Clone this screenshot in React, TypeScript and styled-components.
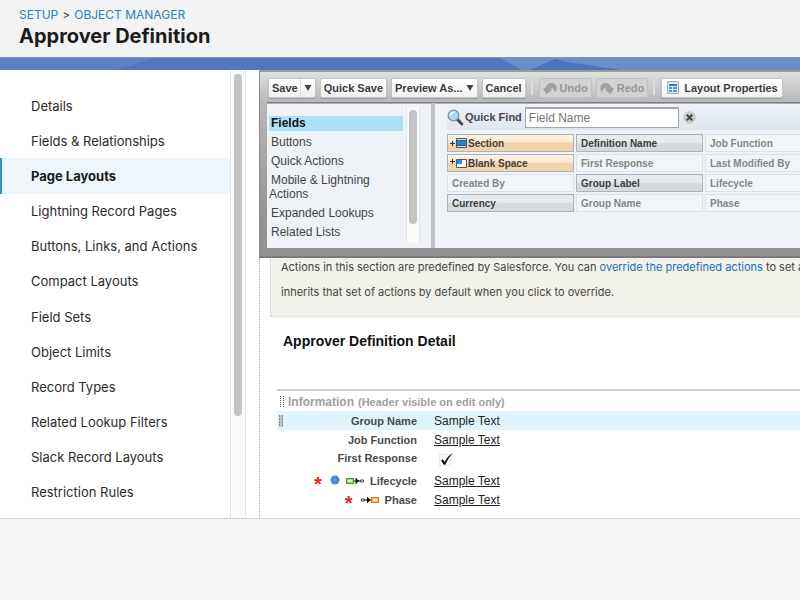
import React from "react";
import styled, { createGlobalStyle, css } from "styled-components";

const sans = `"Liberation Sans", Arial, Helvetica, sans-serif`;
const ui = `Inter, "Open Sans", sans-serif`;

const GlobalStyle = createGlobalStyle`
  *, *::before, *::after { box-sizing: border-box; }
  body { margin: 0; background: #f4f4f4; font-family: ${sans}; }
  h1, h2, h3, p, ul, dl, dd { margin: 0; padding: 0; }
  ul { list-style: none; }
  button, input { font-family: inherit; }
`;

const Page = styled.div`
  display: flex;
  flex-direction: column;
  min-height: 100vh;
  overflow: hidden;
`;

const Header = styled.header`
  padding: 7px 19px 8px;
  background: #f3f3f3;
  font-family: ${ui};
`;

const Crumbs = styled.nav`
  display: flex;
  gap: 4px;
  font-size: 12px;
  line-height: 16px;
  color: #444;
`;

const CrumbLink = styled.a`
  color: #2e7fbd;
  text-decoration: none;
`;

const Title = styled.h1`
  font-size: 20px;
  font-weight: 700;
  line-height: 26px;
  color: #1c1c1c;
`;

const Banner = styled.svg`
  display: block;
  width: 100%;
  height: 13px;
  border-top: 1px solid #8093b8;
  background: #5078c0;
`;

const Workspace = styled.div`
  display: flex;
  flex: 1;
  background: #fff;
  border-bottom: 1px solid #d6d6d6;
`;

const Sidebar = styled.nav`
  display: flex;
  flex: 0 0 230px;
  flex-direction: column;
  padding: 18px 0 8px;
  font-family: ${ui};
`;

const SideLink = styled.a<{ $active?: boolean }>`
  display: flex;
  flex: 1;
  align-items: center;
  min-height: 35px;
  padding-left: 31px;
  color: #2b2b2b;
  font-size: 13px;
  text-decoration: none;
  ${(p) =>
    p.$active &&
    css`
      padding-left: 29px;
      border-left: 2px solid #2a94d6;
      background: #eff6fb;
      color: #1a1a1a;
      font-weight: 700;
    `}
`;

const ScrollTrack = styled.div<{ $narrow?: boolean }>`
  flex: none;
  width: ${(p) => (p.$narrow ? 14 : 16)}px;
  padding: ${(p) => (p.$narrow ? "3px 2px 0" : "4px 3px 0")};
  background: #fafafa;
  border: solid #e4e4e4;
  border-width: 0 1px;
`;

const ScrollThumb = styled.div<{ $ratio: number }>`
  height: ${(p) => p.$ratio}%;
  border-radius: 4px;
  background: #c4c4c4;
`;

const Main = styled.main`
  display: flex;
  flex: 1;
  flex-direction: column;
  min-width: 0;
  margin-left: 13px;
  overflow: hidden;
  white-space: nowrap;
`;

const Editor = styled.section`
  position: relative;
  z-index: 1;
  padding: 0 0 8px 7px;
  border-top: 2px solid #9b9b9f;
  border-left: 1px solid #8b8b8b;
  border-bottom: 2px solid #7b7b7b;
  background: linear-gradient(#e0e0e0, #b8b8ba 30px, #929292 150px);
`;

const Toolbar = styled.div`
  display: flex;
  align-items: center;
  gap: 4px;
  height: 30px;
  padding: 5px 0 4px 1px;
`;

const ToolButton = styled.button`
  display: flex;
  flex: none;
  align-items: center;
  gap: 3px;
  height: 20px;
  padding: 0 3px;
  border: 1px solid #c4c4c4;
  border-radius: 2px;
  background: linear-gradient(#fff, #f1f1f1);
  box-shadow: 0 1px 1px #9a9a9a;
  color: #3c3c3c;
  font-size: 11px;
  font-weight: 700;
  line-height: 18px;
  &:disabled {
    border-color: #c0c0c0;
    background: #d2d2d2;
    box-shadow: none;
    color: #969696;
  }
`;

const SaveLabel = styled.span`
  padding-right: 2px;
  border-right: 1px solid #d5dbe2;
`;

const WideButton = styled(ToolButton)`
  gap: 5px;
  padding: 0 4px 0 5px;
`;

const Separator = styled.span`
  flex: none;
  width: 2px;
  height: 15px;
  margin: 0 2px 0 1px;
  background: #dedede;
`;

const Palette = styled.div`
  display: flex;
  gap: 4px;
  border-top: 1px solid #7e7e7e;
  background: #bfc1c4;
`;

const Categories = styled.div`
  display: flex;
  flex: 0 0 164px;
  background: #eff3f7;
  border-top: 1px solid #a9adb1;
`;

const CategoryList = styled.ul`
  display: flex;
  flex: 1;
  flex-direction: column;
  gap: 4px;
  min-width: 0;
  padding: 12px 0 8px 2px;
`;

const Category = styled.li<{ $active?: boolean }>`
  white-space: normal;
  padding-bottom: 1px;
  color: #444;
  font-size: 12px;
  line-height: 14px;
  text-indent: 2px;
  ${(p) =>
    p.$active &&
    css`
      background: #aee0fa;
      color: #111;
      font-weight: 700;
    `}
`;

const CategoryTrack = styled.div`
  display: flex;
  flex: none;
  padding: 3px 11px 5px 3px;
`;

const Fields = styled.div`
  flex: 1;
  min-width: 0;
  padding-left: 12px;
  background: #eff3f7;
  border-top: 1px solid #a9adb1;
  overflow: hidden;
`;

const Finder = styled.form`
  display: flex;
  align-items: center;
  height: 26px;
  background: linear-gradient(#eff3f7, #dde6ef);
`;

const FindLabel = styled.label`
  display: flex;
  align-items: center;
  gap: 1px;
  padding-right: 3px;
  color: #444;
  font-size: 11px;
  font-weight: 700;
`;

const FindInput = styled.input`
  width: 154px;
  height: 21px;
  padding: 0 3px;
  border: 1px solid #a5a9ae;
  border-width: 2px 1px 1px;
  background: #fff;
  color: #777;
  font-size: 12px;
  &::placeholder { color: #777; opacity: 1; }
`;

const ClearButton = styled.button`
  display: flex;
  margin-left: 4px;
  padding: 0;
  border: 0;
  background: none;
`;

const FieldGrid = styled.div`
  display: grid;
  grid-template-columns: repeat(3, 127px);
  grid-auto-rows: 18px;
  gap: 2px;
  padding-top: 4px;
`;

type Tone = "special" | "available" | "used";

const FieldChip = styled.button<{ $tone: Tone }>`
  display: flex;
  align-items: center;
  gap: 1px;
  padding: 0 4px;
  border: 1px solid #dbe1e6;
  background: #f1f5f8;
  color: #858585;
  font-size: 10px;
  font-weight: 700;
  ${(p) =>
    p.$tone === "available" &&
    css`
      border: 1px solid #a9b4bd;
      background: linear-gradient(#e7ebee 45%, #d6dadd 55%);
      color: #3e3e3e;
    `}
  ${(p) =>
    p.$tone === "special" &&
    css`
      padding: 0 2px;
      border: 1px solid #a9b4bd;
      background: linear-gradient(#fdf3e6 0, #fae8d0 45%, #efd3ab 50%);
      color: #3e3e3e;
    `}
`;

const Canvas = styled.section`
  flex: 1;
  padding-left: 10px;
  border-left: 1px dotted #aaa;
`;

const Notice = styled.p`
  height: 62px;
  margin-top: -3px;
  padding-left: 10px;
  border: 1px dotted #cbcbc4;
  border-width: 0 0 1px 1px;
  background: #f2f2ea;
  color: #444;
  font-family: ${ui};
  font-size: 11px;
  line-height: 25px;
`;

const NoticeLink = styled.a`
  color: #1b6cb5;
  text-decoration: none;
`;

const DetailTitle = styled.h2`
  padding: 15px 0 0 13px;
  color: #111;
  font-size: 14px;
  line-height: 18px;
`;

const Detail = styled.section`
  margin: 39px 0 0 7px;
  border-top: 2px solid #cfcfcf;
`;

const SectionTitle = styled.h3`
  display: flex;
  align-items: center;
  gap: 4px;
  height: 20px;
  padding: 1px 0 0 3px;
  color: #a0a0a0;
  font-size: 12px;
`;

const SectionHint = styled.small`
  font-size: 11px;
`;

const DetailRow = styled.div<{ $active?: boolean; $tall?: boolean }>`
  display: flex;
  align-items: ${(p) => (p.$tall ? "flex-start" : "center")};
  height: ${(p) => (p.$tall ? 22 : 19)}px;
  padding-left: 2px;
  background: ${(p) => (p.$active ? "#e1f4fe" : "transparent")};
`;

const RowHead = styled.dt`
  display: flex;
  align-items: center;
  flex: 0 0 138px;
`;

const RowLabel = styled.span`
  display: flex;
  align-items: center;
  justify-content: flex-end;
  flex: 1;
  gap: 6px;
  color: #4a4a4a;
  font-size: 11px;
  font-weight: 700;
  line-height: 18px;
`;

const RowValue = styled.dd<{ $mark?: boolean }>`
  padding: ${(p) => (p.$mark ? "3px 0 0 22px" : "0 0 0 17px")};
  color: #222;
  font-size: 12px;
`;

const Sample = styled.span<{ $plain?: boolean }>`
  text-decoration: ${(p) => (p.$plain ? "none" : "underline")};
`;

const Required = styled.span`
  height: 18px;
  margin-right: 2px;
  color: #fb1d1d;
  font-size: 20px;
  line-height: 24px;
`;

const Footer = styled.footer`
  height: 81px;
  background: #f4f4f4;
`;

const Caret = () => (
  <svg width="8" height="6" viewBox="0 0 8 6" aria-hidden="true">
    <path d="M0.5 0h7L4 6z" fill="#444" />
  </svg>
);

const TurnIcon = ({ flip }: { flip?: boolean }) => (
  <svg width="14" height="12" viewBox="0 0 14 12" aria-hidden="true">
    <g transform={flip ? "translate(14 0) scale(-1 1)" : undefined}>
      <path d="M0 6.500 2.500 5.500C4 1.500 8 0 11 1.500c3.500 2 3.500 6 1 9-.5-3-2-5-4.500-4l1.500 1.500L3.500 12z" fill="#a0a0a0" />
    </g>
  </svg>
);

const LayoutIcon = () => (
  <svg width="12" height="13" viewBox="0 0 12 13" aria-hidden="true">
    <path d="M.5.5h11v12H.5z" fill="#dfe8f1" stroke="#a5adb5" />
    <path d="M2 3h8v2H2z" fill="#1b83d2" />
    <path d="M2 6h3v2H2zm4 0h4v2H6zM2 9h3v2H2zm4 0h4v2H6z" fill="#3d9be4" />
  </svg>
);

const SearchIcon = () => (
  <svg width="17" height="17" viewBox="0 0 17 17" aria-hidden="true">
    <path d="m10.500 10.500 4.300 4.500" stroke="#3f4952" strokeWidth="3" strokeLinecap="round" />
    <circle cx="6.500" cy="6.500" r="5.300" fill="#a9daf5" stroke="#8493a1" strokeWidth="1.300" />
    <path d="M3.500 6.500c0-2 1.500-3 3.500-3" fill="none" stroke="#fff" strokeWidth="1.600" />
  </svg>
);

const ClearIcon = () => (
  <svg width="13" height="13" viewBox="0 0 13 13" aria-hidden="true">
    <circle cx="6.500" cy="6.500" r="6.300" fill="#cbcbcb" />
    <path d="m3.800 3.800 5.400 5.400m0-5.400L3.800 9.200" stroke="#444" strokeWidth="2" />
  </svg>
);

const SectionIcon = () => (
  <svg width="17" height="12" viewBox="0 0 17 12" aria-hidden="true">
    <path d="M0 6.500h5M2.500 4v5" stroke="#333" />
    <path d="M6.500 1.500h10v9h-10z" fill="#cfe6f7" stroke="#555" />
    <path d="M7 4h9v4H7z" fill="#0d8be8" />
    <path d="M7 3.500h9m-9 5h9" stroke="#555" />
  </svg>
);

const BlankIcon = () => (
  <svg width="17" height="12" viewBox="0 0 17 12" aria-hidden="true">
    <path d="M0 4.500h5M2.500 2v5" stroke="#333" />
    <path d="M6.500 2.500h10v8h-10z" fill="#fff" stroke="#555" />
    <path d="M7 3h5v4H7z" fill="#0d9bf5" />
  </svg>
);

const Grip = ({ solid }: { solid?: boolean }) => (
  <svg width="4" height="12" viewBox="0 0 4 12" aria-hidden="true">
    {solid && <path d="M0 0h4v12H0z" fill="#b9c6cd" />}
    <path d="M.5 0v12m3-12v12" stroke={solid ? "#7f8a90" : "#555"} strokeDasharray={solid ? "2 1" : "1 1"} />
  </svg>
);

const Check = () => (
  <svg width="15" height="15" viewBox="0 0 15 15" role="img" aria-label="Checked">
    <path d="M.5 2.500h11v11H.5z" fill="none" stroke="#d5d5d5" strokeDasharray="1 1" />
    <path d="m2 8.500 1.800-1.200 1.900 2.700C7.500 6 10 3 14 1 10.500 4.500 8.300 8 6.400 12.700H4.900z" fill="#111" />
  </svg>
);

const Dot = () => (
  <svg width="10" height="12" viewBox="0 0 10 12" aria-hidden="true">
    <circle cx="5" cy="5" r="4.500" fill="#4a86dc" />
    <circle cx="5" cy="5" r="1" fill="#7fb0f0" />
  </svg>
);

const Controlling = () => (
  <svg width="18" height="8" viewBox="0 0 18 8" aria-hidden="true">
    <path d="M.7 1.700h6.600v4.600H.7z" fill="#ffffa8" stroke="#3ca52e" strokeWidth="1.400" />
    <path d="M8 4h6" stroke="#222" strokeWidth="1.200" />
    <path d="m9.500.5 3.500 3.500-3.500 3.500z" fill="#111" />
    <path d="M14.500 3h3v2h-3z" fill="#fff" stroke="#444" />
  </svg>
);

const Dependent = () => (
  <svg width="18" height="8" viewBox="0 0 18 8" aria-hidden="true">
    <path d="M.5 3h3v2h-3z" fill="#fff" stroke="#444" />
    <path d="M4 4h6" stroke="#222" strokeWidth="1.200" />
    <path d="m6 .5 3.500 3.500L6 7.500z" fill="#111" />
    <path d="M10.700 1.700h6.600v4.600h-6.600z" fill="#ffffa8" stroke="#f06a2c" strokeWidth="1.400" />
  </svg>
);

const sideItems = [
  "Details",
  "Fields & Relationships",
  "Page Layouts",
  "Lightning Record Pages",
  "Buttons, Links, and Actions",
  "Compact Layouts",
  "Field Sets",
  "Object Limits",
  "Record Types",
  "Related Lookup Filters",
  "Slack Record Layouts",
  "Restriction Rules",
];

const categories = ["Fields", "Buttons", "Quick Actions", "Mobile & Lightning Actions", "Expanded Lookups", "Related Lists"];

const fields: { label: string; tone: Tone; icon?: React.ReactNode }[] = [
  { label: "Section", tone: "special", icon: <SectionIcon /> },
  { label: "Definition Name", tone: "available" },
  { label: "Job Function", tone: "used" },
  { label: "Blank Space", tone: "special", icon: <BlankIcon /> },
  { label: "First Response", tone: "used" },
  { label: "Last Modified By", tone: "used" },
  { label: "Created By", tone: "used" },
  { label: "Group Label", tone: "available" },
  { label: "Lifecycle", tone: "used" },
  { label: "Currency", tone: "available" },
  { label: "Group Name", tone: "used" },
  { label: "Phase", tone: "used" },
];

const rows: { label: string; active?: boolean; checked?: boolean; marks?: React.ReactNode }[] = [
  { label: "Group Name", active: true },
  { label: "Job Function" },
  { label: "First Response", checked: true },
  {
    label: "Lifecycle",
    marks: (
      <>
        <Required>*</Required>
        <Dot />
        <Controlling />
      </>
    ),
  },
  {
    label: "Phase",
    marks: (
      <>
        <Required>*</Required>
        <Dependent />
      </>
    ),
  },
];

export default function App() {
  return (
    <Page>
      <GlobalStyle />
      <Header>
        <Crumbs aria-label="Breadcrumb">
          <CrumbLink href="#setup">SETUP</CrumbLink>
          <span>&gt;</span>
          <CrumbLink href="#objects">OBJECT MANAGER</CrumbLink>
        </Crumbs>
        <Title>Approver Definition</Title>
      </Header>
      <Banner viewBox="0 0 800 12" preserveAspectRatio="none" aria-hidden="true">
        <path d="M0 0h155L115 12H0z" fill="#5d82c3" />
        <path d="M500 0h300v12H522z" fill="#6d8dca" />
        <path d="m530 12 25-11 12 3 20 3 35 5z" fill="#4a74be" />
      </Banner>
      <Workspace>
        <Sidebar aria-label="Object settings">
          {sideItems.map((item) => (
            <SideLink key={item} href="#" $active={item === "Page Layouts"}>
              {item}
            </SideLink>
          ))}
        </Sidebar>
        <ScrollTrack>
          <ScrollThumb $ratio={77} />
        </ScrollTrack>
        <Main>
          <Editor>
            <Toolbar>
              <ToolButton>
                <SaveLabel>Save</SaveLabel>
                <Caret />
              </ToolButton>
              <ToolButton>Quick Save</ToolButton>
              <ToolButton>
                Preview As... <Caret />
              </ToolButton>
              <ToolButton>Cancel</ToolButton>
              <Separator />
              <ToolButton disabled>
                <TurnIcon />
                Undo
              </ToolButton>
              <ToolButton disabled>
                <TurnIcon flip />
                Redo
              </ToolButton>
              <Separator />
              <WideButton>
                <LayoutIcon />
                Layout Properties
              </WideButton>
            </Toolbar>
            <Palette>
              <Categories>
                <CategoryList>
                  {categories.map((name) => (
                    <Category key={name} $active={name === "Fields"}>
                      {name}
                    </Category>
                  ))}
                </CategoryList>
                <CategoryTrack>
                  <ScrollTrack $narrow>
                    <ScrollThumb $ratio={86} />
                  </ScrollTrack>
                </CategoryTrack>
              </Categories>
              <Fields>
                <Finder>
                  <FindLabel htmlFor="quick-find">
                    <SearchIcon />
                    Quick Find
                  </FindLabel>
                  <FindInput id="quick-find" type="text" placeholder="Field Name" />
                  <ClearButton type="button" aria-label="Clear">
                    <ClearIcon />
                  </ClearButton>
                </Finder>
                <FieldGrid>
                  {fields.map((field) => (
                    <FieldChip key={field.label} $tone={field.tone} type="button">
                      {field.icon}
                      {field.label}
                    </FieldChip>
                  ))}
                </FieldGrid>
              </Fields>
            </Palette>
          </Editor>
          <Canvas>
            <Notice>
              Actions in this section are predefined by Salesforce. You can{" "}
              <NoticeLink href="#override">override the predefined actions</NoticeLink> to set a
              <br />
              inherits that set of actions by default when you click to override.
            </Notice>
            <DetailTitle>Approver Definition Detail</DetailTitle>
            <Detail>
              <SectionTitle>
                <Grip />
                Information <SectionHint>(Header visible on edit only)</SectionHint>
              </SectionTitle>
              <dl>
                {rows.map((row) => (
                  <DetailRow key={row.label} $active={row.active} $tall={row.checked}>
                    <RowHead>
                      {row.active && <Grip solid />}
                      <RowLabel>
                        {row.marks}
                        {row.label}
                      </RowLabel>
                    </RowHead>
                    <RowValue $mark={row.checked}>
                      {row.checked ? <Check /> : <Sample $plain={row.active}>Sample Text</Sample>}
                    </RowValue>
                  </DetailRow>
                ))}
              </dl>
            </Detail>
          </Canvas>
        </Main>
      </Workspace>
      <Footer />
    </Page>
  );
}
